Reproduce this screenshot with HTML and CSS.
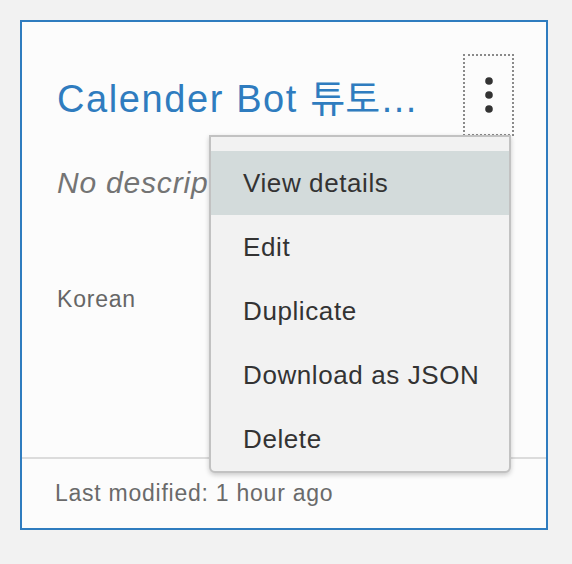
FILE: index.html
```html
<!DOCTYPE html>
<html>
<head>
<meta charset="utf-8">
<link rel="stylesheet" href="styles.css">
</head>
<body>
<div class="card">
  <div class="card-header">
    <div class="title">Calender Bot <span class="ko">튜토</span>…</div>
    <button class="kebab" aria-label="More">
      <svg width="10" height="38" viewBox="0 0 10 38"><circle cx="5" cy="5" r="3.8" fill="#333"/><circle cx="5" cy="19" r="3.8" fill="#333"/><circle cx="5" cy="33" r="3.8" fill="#333"/></svg>
    </button>
  </div>
  <div class="desc">No description</div>
  <div class="lang">Korean</div>
  <div class="footer">Last modified: 1 hour ago</div>
  <ul class="menu">
    <li class="item active">View details</li>
    <li class="item">Edit</li>
    <li class="item">Duplicate</li>
    <li class="item">Download as JSON</li>
    <li class="item">Delete</li>
  </ul>
</div>
</body>
</html>
```
FILE: styles.css
```css
html, body {
  margin: 0;
  padding: 0;
  background: #f2f2f2;
}
body {
  padding: 20px;
  font-family: "Liberation Sans", Arial, "Noto Sans CJK KR", sans-serif;
}
.card {
  position: relative;
  box-sizing: border-box;
  width: 528px;
  height: 510px;
  border: 2px solid #2f7cbf;
  background: #fcfcfc;
  display: flex;
  flex-direction: column;
}
.card-header {
  display: flex;
  align-items: center;
  justify-content: space-between;
  height: 82px;
  margin: 32px 32px 0 35px;
}
.title {
  font-size: 38px;
  letter-spacing: 1.6px;
  color: #2f7cbf;
  white-space: nowrap;
}
.title .ko {
  letter-spacing: 0;
}
.kebab {
  box-sizing: border-box;
  width: 51px;
  height: 82px;
  border: 2px dotted #8a8a8a;
  background: transparent;
  padding: 0;
  margin: 0;
  display: flex;
  align-items: center;
  justify-content: center;
}
.kebab svg { display: block; }
.desc {
  margin: 30px 0 0 35px;
  font-size: 30px;
  letter-spacing: 0.8px;
  line-height: 34px;
  font-style: italic;
  color: #747474;
  white-space: nowrap;
}
.lang {
  margin: 85px 0 0 35px;
  font-size: 23px;
  letter-spacing: 0.8px;
  line-height: 28px;
  color: #666;
}
.footer {
  margin-top: auto;
  height: 71px;
  box-sizing: border-box;
  border-top: 2px solid #dcdcdc;
  padding-left: 33px;
  display: flex;
  align-items: center;
  font-size: 23px;
  letter-spacing: 0.75px;
  color: #6a6a6a;
}
.menu {
  position: absolute;
  left: 187px;
  top: 113px;
  width: 302px;
  box-sizing: border-box;
  margin: 0;
  padding: 14px 0 0 0;
  list-style: none;
  background: #f2f2f2;
  border: 2px solid #c2c2c2;
  border-radius: 0 0 6px 6px;
  box-shadow: 0 2px 5px rgba(0,0,0,0.2);
}
.item {
  height: 64px;
  display: flex;
  align-items: center;
  padding-left: 32px;
  font-size: 26px;
  letter-spacing: 0.6px;
  color: #333;
}
.item.active {
  background: #d3dbdb;
}
```
